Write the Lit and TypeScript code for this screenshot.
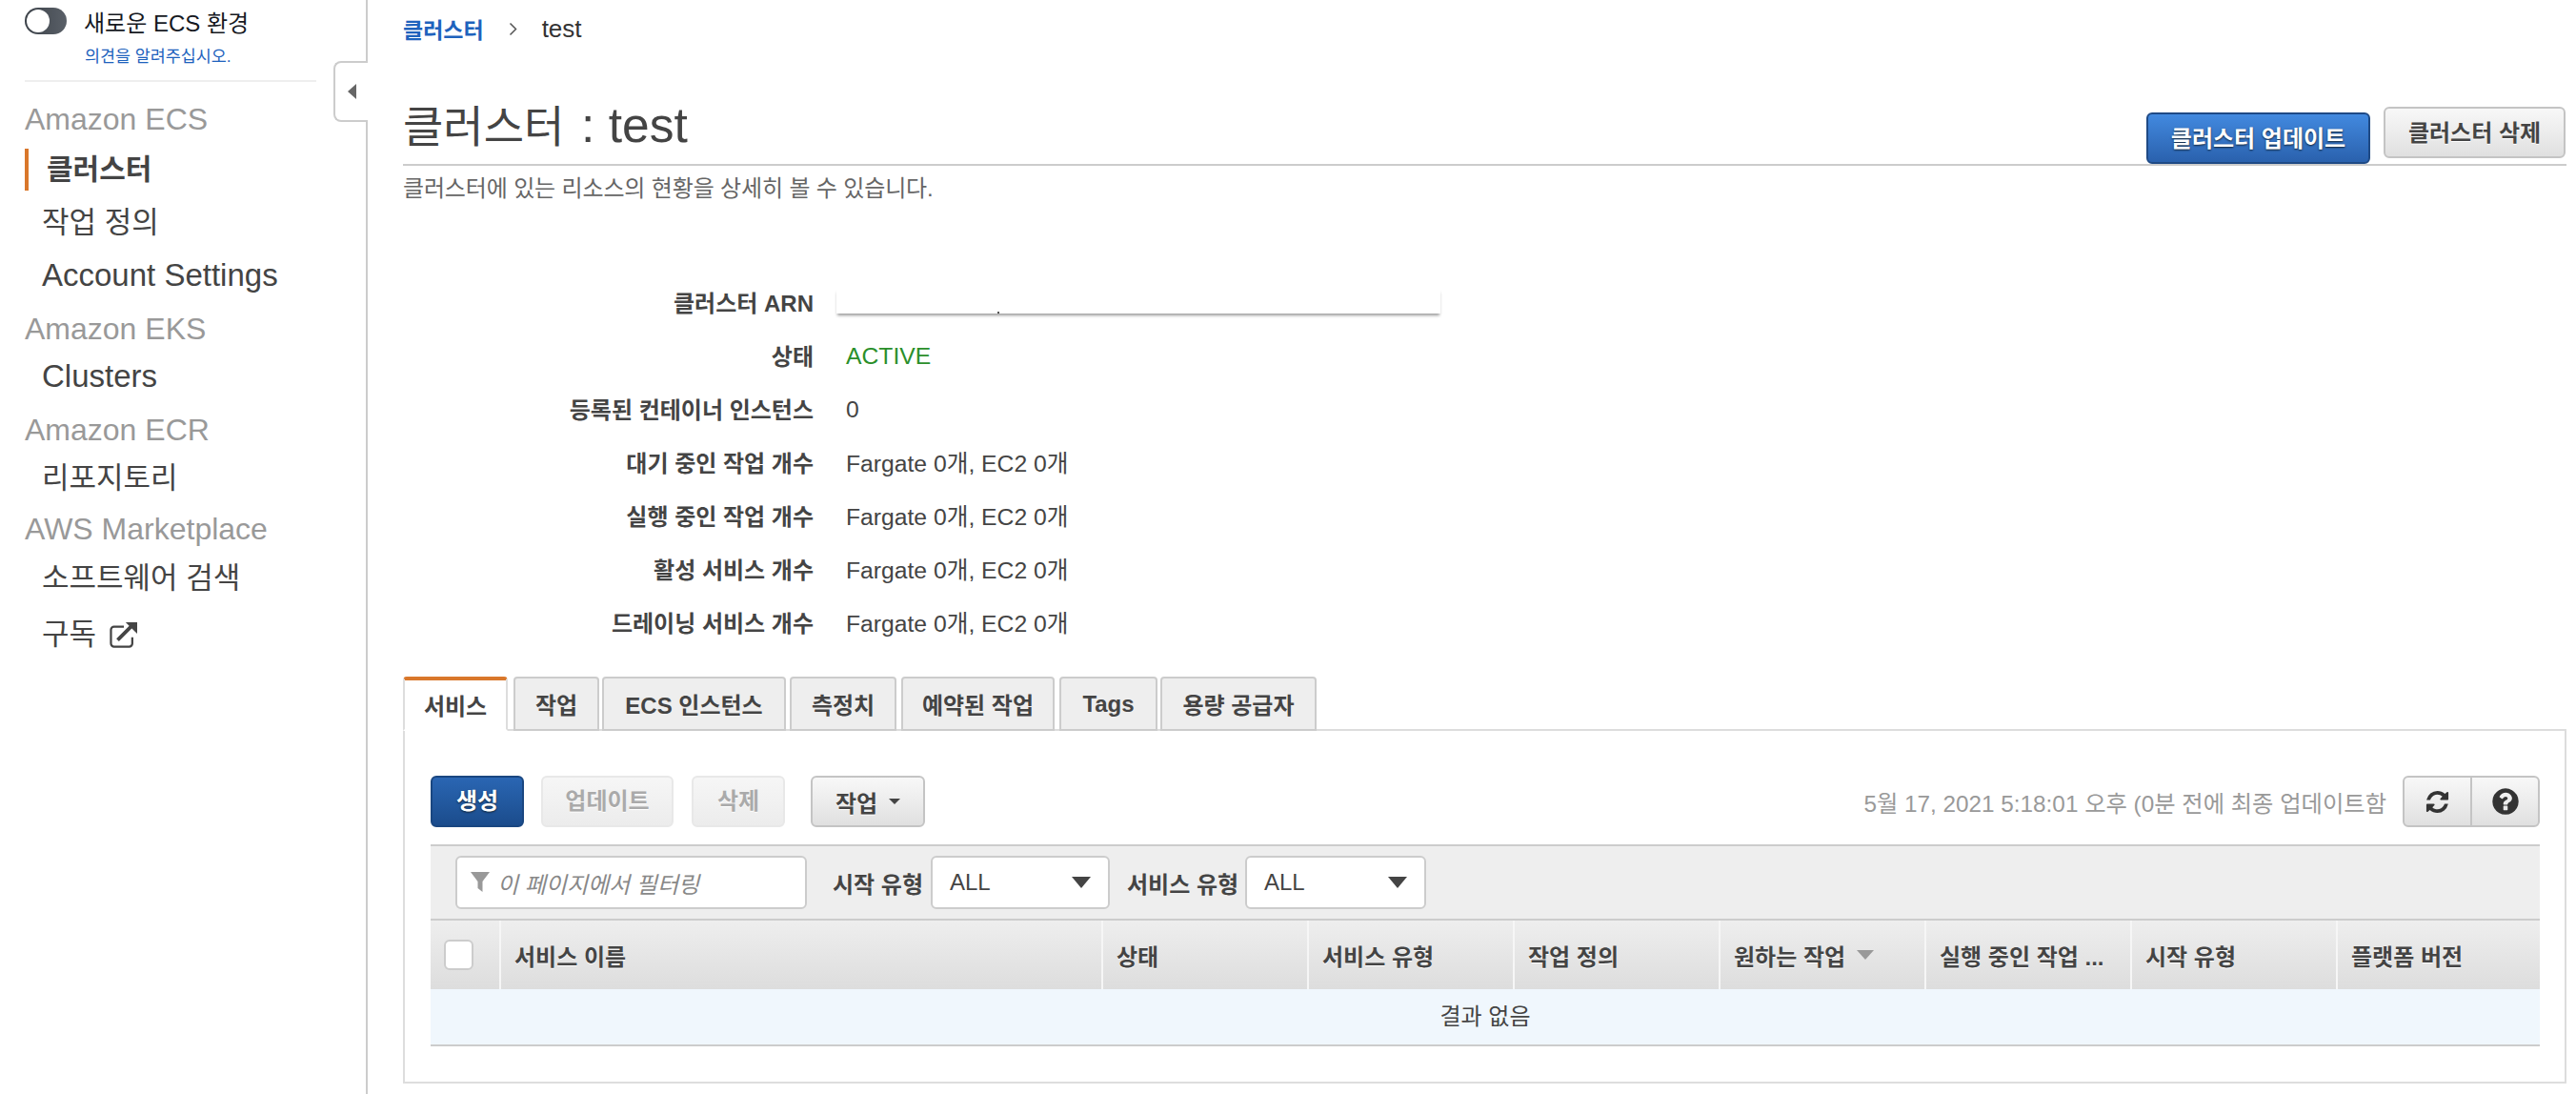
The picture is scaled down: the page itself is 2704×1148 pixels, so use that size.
import { LitElement, html, css } from "lit";
import { customElement } from "lit/decorators.js";

const REFRESH = "M1639 1056q0 5-1 7-64 268-268 434.5t-478 166.5q-146 0-282.5-55t-243.5-157l-129 129q-19 19-45 19t-45-19-19-45v-448q0-26 19-45t45-19h448q26 0 45 19t19 45-19 45l-137 137q71 66 161 102t187 36q134 0 250-65t186-179q11-17 53-117 8-23 30-23h192q13 0 22.5 9.5t9.5 22.5zm25-800v448q0 26-19 45t-45 19h-448q-26 0-45-19t-19-45 19-45l138-138q-148-137-349-137-134 0-250 65t-186 179q-11 17-53 117-8 23-30 23h-199q-13 0-22.5-9.5t-9.5-22.5v-7q65-268 270-434.5t480-166.5q146 0 284 55.5t245 156.5l130-129q19-19 45-19t45 19 19 45z";
const HELP = "M1024 1376v-192q0-14-9-23t-23-9h-192q-14 0-23 9t-9 23v192q0 14 9 23t23 9h192q14 0 23-9t9-23zm256-672q0-88-55.5-163t-138.5-116-170-41q-243 0-371 213-15 24 8 42l132 100q7 6 19 6 16 0 25-12 53-68 86-92 34-24 86-24 48 0 85.5 26t37.5 59q0 38-20 61t-68 45q-63 28-115.5 86.5t-52.5 125.5v36q0 14 9 23t23 9h192q14 0 23-9t9-23q0-19 21.5-49.5t54.5-49.5q32-18 49-28.5t46-35 44.5-48 28-60.5 12.5-81zm384 192q0 209-103 385.5t-279.5 279.5-385.5 103-385.5-103-279.5-279.5-103-385.5 103-385.5 279.5-279.5 385.5-103 385.5 103 279.5 279.5 103 385.5z";

const details = [
  ["대기 중인 작업 개수", "Fargate 0개, EC2 0개"],
  ["실행 중인 작업 개수", "Fargate 0개, EC2 0개"],
  ["활성 서비스 개수", "Fargate 0개, EC2 0개"],
  ["드레이닝 서비스 개수", "Fargate 0개, EC2 0개"],
];

const tabs: [string, number, number][] = [
  ["서비스", 110, 6], ["작업", 90, 3], ["ECS 인스턴스", 193, 4], ["측정치", 112, 5],
  ["예약된 작업", 161, 5], ["Tags", 103, 3], ["용량 공급자", 164, 0],
];

const cols = ["서비스 유형", "작업 정의", "원하는 작업", "실행 중인 작업 ...", "시작 유형", "플랫폼 버전"];

@customElement("app-root")
export class AppRoot extends LitElement {
  static styles = css`
    :host {
      display: flex;
      width: 2704px;
      height: 1148px;
      overflow: hidden;
      background: #fff;
      color: #444;
      font-family: "Liberation Sans", "Noto Sans CJK KR", sans-serif;
      font-size: 24px;
      position: relative;
    }
    * { box-sizing: border-box; }
    .side {
      width: 386px;
      flex: none;
      border-right: 2px solid #ccc;
      padding: 7px 0 0 26px;
      position: relative;
    }
    .collapse {
      position: absolute;
      left: 350px;
      top: 64px;
      width: 36px;
      height: 64px;
      background: #fff;
      border: 2px solid #ccc;
      border-right: none;
      border-radius: 8px 0 0 8px;
      display: flex;
      align-items: center;
      justify-content: center;
    }
    .collapse i {
      display: block;
      width: 0; height: 0;
      border-style: solid;
      border-width: 8px 9px 8px 0;
      border-color: transparent #666 transparent transparent;
    }
    .toggle-row { display: flex; align-items: center; height: 30px; }
    .toggle {
      width: 44px; height: 28px;
      border-radius: 14px;
      background: linear-gradient(90deg, #3c4249, #5a6068);
      padding: 2px;
    }
    .toggle i { display: block; width: 24px; height: 24px; border-radius: 50%; background: #fff; }
    .toggle-label { margin-left: 18px; color: #16191f; font-size: 24px; }
    .feedback {
      display: block;
      margin: 9px 0 0 63px;
      line-height: 26px;
      font-size: 17.400px;
      color: #1e62bd;
    }
    .rule { width: 306px; height: 2px; background: #eee; margin-top: 12px; }
    .nav { margin-top: 14px; }
    .sec { height: 50px; line-height: 50px; font-size: 32px; color: #999; white-space: nowrap; }
    .group:first-child .sec { height: 53px; }
    .group + .group { margin-top: 6px; }
    .item {
      height: 50px;
      line-height: 50px;
      padding-left: 18px;
      padding-top: 4px;
      font-size: 31px;
      color: #444;
      white-space: nowrap;
      display: flex;
      align-items: center;
    }
    .item + .item { margin-top: 7px; }
    .item.latin { font-size: 33px; padding-top: 0; }
    .item.compact { height: 48px; }
    .item.low { padding-top: 8px; }
    .item.active {
      font-weight: 700;
      font-size: 30px;
      padding-left: 19px;
      padding-top: 0;
      position: relative;
      height: 44px;
      margin: 3px 0;
      border-left: 4px solid #d9772b;
    }
    .item.active + .item { margin-top: 7px; }
    .item svg { margin-left: 14px; }

    .main { flex: 1; min-width: 0; padding: 0 10px 0 37px; }
    .crumbs { height: 60px; display: flex; align-items: center; }
    .crumbs a { color: #1e62bd; font-weight: 700; font-size: 23px; }
    .crumbs svg { margin: 0 26px 0 26px; }
    .crumbs span { color: #333; font-size: 26px; }
    .head {
      height: 114px;
      border-bottom: 2px solid #ccc;
      display: flex;
      align-items: flex-end;
      justify-content: space-between;
    }
    h1 { margin: 0 0 9px; font-weight: 400; font-size: 46px; line-height: 60px; color: #444; }
    h1 span { font-size: 51.500px; margin-left: 5px; }
    .actions { display: flex; align-items: flex-end; gap: 14px; padding-right: 1px; }
    .btn {
      display: inline-flex;
      align-items: center;
      justify-content: center;
      height: 54px;
      font: inherit;
      font-weight: 700;
      border-radius: 6px;
      border: 2px solid #c4c4c4;
      color: #444;
      background: linear-gradient(#f8f8f8, #e0e0e0);
      text-shadow: 0 1px 0 #fff;
      padding: 0;
      white-space: nowrap;
    }
    .btn.primary {
      background: linear-gradient(#4289df, #2a61ad);
      border-color: #1f4a85;
      color: #fff;
      text-shadow: 0 1px 2px #123;
      padding-bottom: 4px;
    }
    .btn.dark {
      background: linear-gradient(#2a66b3, #1b4c8c);
      border-color: #1a4781;
      color: #fff;
      text-shadow: 0 1px 2px #123;
      padding-bottom: 6px;
    }
    .btn.off {
      background: linear-gradient(#f6f6f6, #ececec);
      border-color: #e8e8e8;
      color: #aaa;
      padding-bottom: 6px;
    }
    .b-update { width: 235px; }
    .b-delete { width: 191px; margin-bottom: 6px; padding-bottom: 4px; }
    .sub { margin-top: 9px; line-height: 30px; color: #666; font-size: 24px; letter-spacing: -0.15px; }
    .details { margin-top: 75px; }
    .row { height: 56px; display: grid; grid-template-columns: 431px 1fr; column-gap: 34px; align-items: center; }
    .row b { text-align: right; font-weight: 700; color: #444; }
    .row span { font-size: 24.700px; }
    .row span.plain { padding-top: 3px; }
    .green { color: #2a8f2a; }
    .redact {
      display: block;
      position: relative;
      width: 634px;
      height: 26px;
      margin-left: -10px;
      background: #fff;
      box-shadow: 0 3px 3px -1px rgba(0,0,0,.4);
    }
    .redact::after {
      content: "";
      position: absolute;
      left: 169px;
      bottom: 0;
      width: 2px;
      height: 2px;
      background: #555;
    }

    .tabs { display: flex; margin-top: 30px; height: 57px; position: relative; z-index: 1; }
    .tab {
      display: flex;
      align-items: center;
      justify-content: center;
      background: #eee;
      border: 2px solid #ccc;
      border-bottom: 2px solid #ccc;
      border-radius: 4px 4px 0 0;
      font-weight: 700;
      white-space: nowrap;
      font-size: 24px;
    }
    .tab.on {
      background: #fff;
      border-color: #ddd;
      border-top: 4px solid #d9772b;
      border-bottom-color: #fff;
    }
    .panel {
      margin-top: -2px;
      height: 372px;
      border: 2px solid #ddd;
      padding: 47px 26px 0 27px;
    }
    .toolbar { display: flex; align-items: center; height: 54px; }
    .b-create { width: 98px; }
    .b-upd { width: 139px; margin-left: 18px; }
    .b-del { width: 98px; margin-left: 19px; }
    .b-act { width: 120px; margin-left: 27px; }
    .caret {
      width: 0; height: 0; margin-left: 12px;
      border-style: solid; border-width: 6px 6px 0 6px;
      border-color: #444 transparent transparent transparent;
    }
    .stamp { margin-left: auto; color: #999; margin-right: 17px; white-space: nowrap; font-size: 24.300px; }
    .bgroup { display: flex; width: 144px; height: 54px; border: 2px solid #c4c4c4; border-radius: 6px; background: linear-gradient(#f8f8f8, #e0e0e0); }
    .bgroup span { flex: 1; display: flex; align-items: center; justify-content: center; }
    .bgroup span + span { border-left: 2px solid #c4c4c4; }
    .filter {
      margin-top: 18px;
      height: 80px;
      background: #eee;
      border-top: 2px solid #ccc;
      border-bottom: 2px solid #ccc;
      display: flex;
      align-items: center;
      padding-left: 26px;
    }
    .input, .select {
      height: 56px;
      background: #fff;
      border: 2px solid #ccc;
      border-radius: 6px;
      display: flex;
      align-items: center;
    }
    .input { width: 369px; padding-left: 14px; color: #888; font-style: italic; }
    .input svg { margin-right: 8px; }
    .select { padding: 0 18px; justify-content: space-between; color: #444; }
    .tri {
      width: 0; height: 0;
      border-style: solid; border-width: 12px 10px 0 10px;
      border-color: #444 transparent transparent transparent;
    }
    .f-label { font-weight: 700; color: #444; white-space: nowrap; }
    .l1 { margin-left: 27px; width: 93px; }
    .s1 { margin-left: 10px; width: 188px; }
    .l2 { margin-left: 18px; width: 116px; }
    .s2 { margin-left: 8px; width: 190px; }
    .thead {
      display: grid;
      grid-template-columns: 72px 632px 216px 216px 216px 216px 216px 216px 214px;
      height: 72px;
      background: linear-gradient(#eee, #ddd);
    }
    .th {
      border-left: 2px solid #f6f6f6;
      display: flex;
      align-items: center;
      padding-left: 14px;
      font-weight: 700;
      color: #444;
      white-space: nowrap;
      text-shadow: 0 1px 0 #fff;
    }
    .th:first-child { border-left: none; padding-left: 14px; }
    .check { width: 31px; height: 32px; background: #fff; border: 2px solid #ccc; border-radius: 6px; }
    .sort {
      width: 0; height: 0; margin-left: 12px;
      border-style: solid; border-width: 10px 9px 0 9px;
      border-color: #999 transparent transparent transparent;
    }
    .empty {
      height: 60px;
      background: #f0f7fd;
      border-bottom: 2px solid #ccc;
      display: flex;
      align-items: center;
      justify-content: center;
      color: #444;
      padding-bottom: 6px;
    }
  `;

  render() {
    return html`
      <aside class="side">
        <div class="toggle-row">
          <div class="toggle"><i></i></div>
          <span class="toggle-label">새로운 ECS 환경</span>
        </div>
        <a class="feedback">의견을 알려주십시오.</a>
        <div class="rule"></div>
        <nav class="nav">
          <div class="group">
            <div class="sec">Amazon ECS</div>
            <div class="item active">클러스터</div>
            <div class="item">작업 정의</div>
            <div class="item latin">Account Settings</div>
          </div>
          <div class="group">
            <div class="sec">Amazon EKS</div>
            <div class="item latin">Clusters</div>
          </div>
          <div class="group">
            <div class="sec">Amazon ECR</div>
            <div class="item compact">리포지토리</div>
          </div>
          <div class="group">
            <div class="sec">AWS Marketplace</div>
            <div class="item">소프트웨어 검색</div>
            <div class="item low">
              구독
              <svg width="30" height="28" viewBox="0 0 32 30" fill="none">
                <path d="M16 6H5a3.500 3.500 0 0 0-3.500 3.500V25a3.500 3.500 0 0 0 3.500 3.500h17a3.500 3.500 0 0 0 3.500-3.500v-7" stroke="#444" stroke-width="2.400"/>
                <path d="M9 21L24 6" stroke="#444" stroke-width="4"/>
                <path d="M18 1h13v13z" fill="#444"/>
              </svg>
            </div>
          </div>
        </nav>
        <div class="collapse"><i></i></div>
      </aside>
      <main class="main">
        <div class="crumbs">
          <a>클러스터</a>
          <svg width="9" height="15" viewBox="0 0 9 15" fill="none"><path d="M1.500 1.500l6 6-6 6" stroke="#555" stroke-width="1.500"/></svg>
          <span>test</span>
        </div>
        <div class="head">
          <h1>클러스터 <span>: test</span></h1>
          <div class="actions">
            <button class="btn primary b-update">클러스터 업데이트</button>
            <button class="btn b-delete">클러스터 삭제</button>
          </div>
        </div>
        <div class="sub">클러스터에 있는 리소스의 현황을 상세히 볼 수 있습니다.</div>
        <div class="details">
          <div class="row"><b>클러스터 ARN</b><span class="redact"></span></div>
          <div class="row"><b>상태</b><span class="green plain">ACTIVE</span></div>
          <div class="row"><b>등록된 컨테이너 인스턴스</b><span class="plain">0</span></div>
          ${details.map(([k, v]) => html`<div class="row"><b>${k}</b><span>${v}</span></div>`)}
        </div>
        <div class="tabs">
          ${tabs.map(([t, w, m], i) => html`<div class="tab ${i === 0 ? "on" : ""}" style="width:${w}px;margin-right:${m}px">${t}</div>`)}
        </div>
        <section class="panel">
          <div class="toolbar">
            <button class="btn dark b-create">생성</button>
            <button class="btn off b-upd">업데이트</button>
            <button class="btn off b-del">삭제</button>
            <button class="btn b-act">작업<i class="caret"></i></button>
            <span class="stamp">5월 17, 2021 5:18:01 오후 (0분 전에 최종 업데이트함</span>
            <div class="bgroup">
              <span><svg width="27" height="27" viewBox="0 0 1792 1792"><path fill="#333" d="${REFRESH}"/></svg></span>
              <span><svg width="32" height="32" viewBox="0 0 1792 1792"><path fill="#333" d="${HELP}"/></svg></span>
            </div>
          </div>
          <div class="filter">
            <div class="input">
              <svg width="20" height="24" viewBox="0 0 20 24"><path fill="#999" d="M0 1h20L12.500 11v11l-5-4V11z"/></svg>
              이 페이지에서 필터링
            </div>
            <span class="f-label l1">시작 유형</span>
            <div class="select s1">ALL<i class="tri"></i></div>
            <span class="f-label l2">서비스 유형</span>
            <div class="select s2">ALL<i class="tri"></i></div>
          </div>
          <div class="thead">
            <div class="th"><div class="check"></div></div>
            <div class="th">서비스 이름</div>
            <div class="th">상태</div>
            ${cols.map((c, i) => html`<div class="th">${c}${i === 2 ? html`<i class="sort"></i>` : ""}</div>`)}
          </div>
          <div class="empty">결과 없음</div>
        </section>
      </main>
    `;
  }
}
